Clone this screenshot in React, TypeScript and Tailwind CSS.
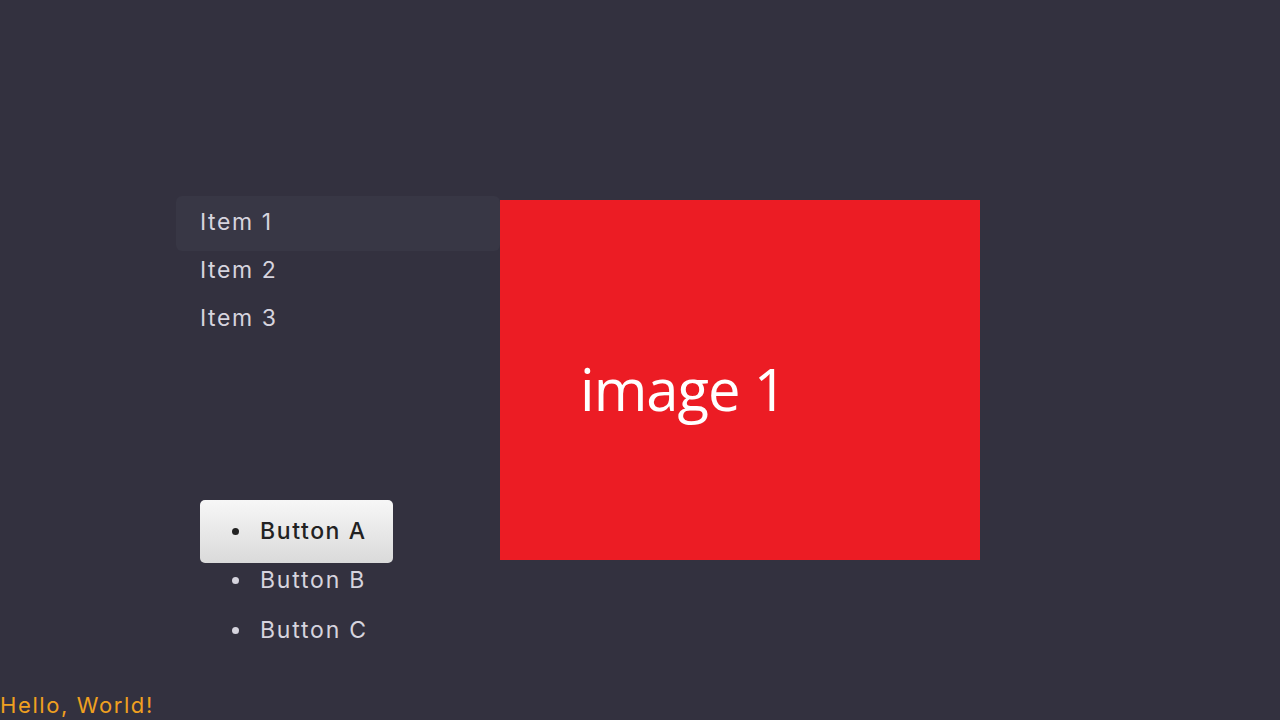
import React from 'react';

const items = ['Item 1', 'Item 2', 'Item 3'];
const buttons = ['Button A', 'Button B', 'Button C'];

const Bullet: React.FC<{ dark?: boolean }> = ({ dark }) => (
    <span className={`w-[7px] h-[7px] rounded-full ${dark ? 'bg-[#222222]' : 'bg-[#d6d4de]'}`} />
);

export default function App() {
    return (
        <div className="h-[720px] w-[1280px] bg-[#33313f] flex flex-col font-['Inter',sans-serif] overflow-hidden">
            <div className="flex-1 flex pt-[196px] pl-[176px]">
                <div className="w-[324px] flex flex-col">
                    <ul className="flex flex-col">
                        {items.map((label, i) => (
                            <li
                                key={label}
                                className={
                                    i === 0
                                        ? 'h-[55px] pt-[2px] pb-[5px] -mb-[5px] flex items-center pl-6 rounded-[6px] bg-[#383745] text-[23px] text-[#d6d4de] tracking-[1.6px]'
                                        : 'h-12 flex items-center pl-6 text-[23px] text-[#d6d4de] tracking-[1.6px]'
                                }
                            >
                                {label}
                            </li>
                        ))}
                    </ul>
                    <ul className="mt-[158px] ml-6 flex flex-col">
                        {buttons.map((label, i) => (
                            <li
                                key={label}
                                className={
                                    i === 0
                                        ? 'w-[193px] h-[63px] -mb-[8px] flex items-center pl-[32px] gap-[21px] rounded-[5px] bg-gradient-to-b from-[#f7f7f7] to-[#dadada] text-[23px] font-medium text-[#222222] tracking-[1.6px]'
                                        : 'h-[50px] flex items-center pl-[32px] gap-[21px] text-[23px] text-[#d6d4de] tracking-[1.8px]'
                                }
                            >
                                <Bullet dark={i === 0} />
                                <span>{label}</span>
                            </li>
                        ))}
                    </ul>
                </div>
                <div className="w-[480px] h-[360px] mt-[4px] bg-[#ec1c24] flex items-center pl-[80px] pt-[16px]">
                    <span className="text-[58px] text-white font-['Open_Sans',sans-serif] tracking-[-1px]">image 1</span>
                </div>
            </div>
            <div className="h-[30px] leading-[30px] text-[22px] text-[#f0a020] tracking-[1.6px]">Hello, World!</div>
        </div>
    );
}
